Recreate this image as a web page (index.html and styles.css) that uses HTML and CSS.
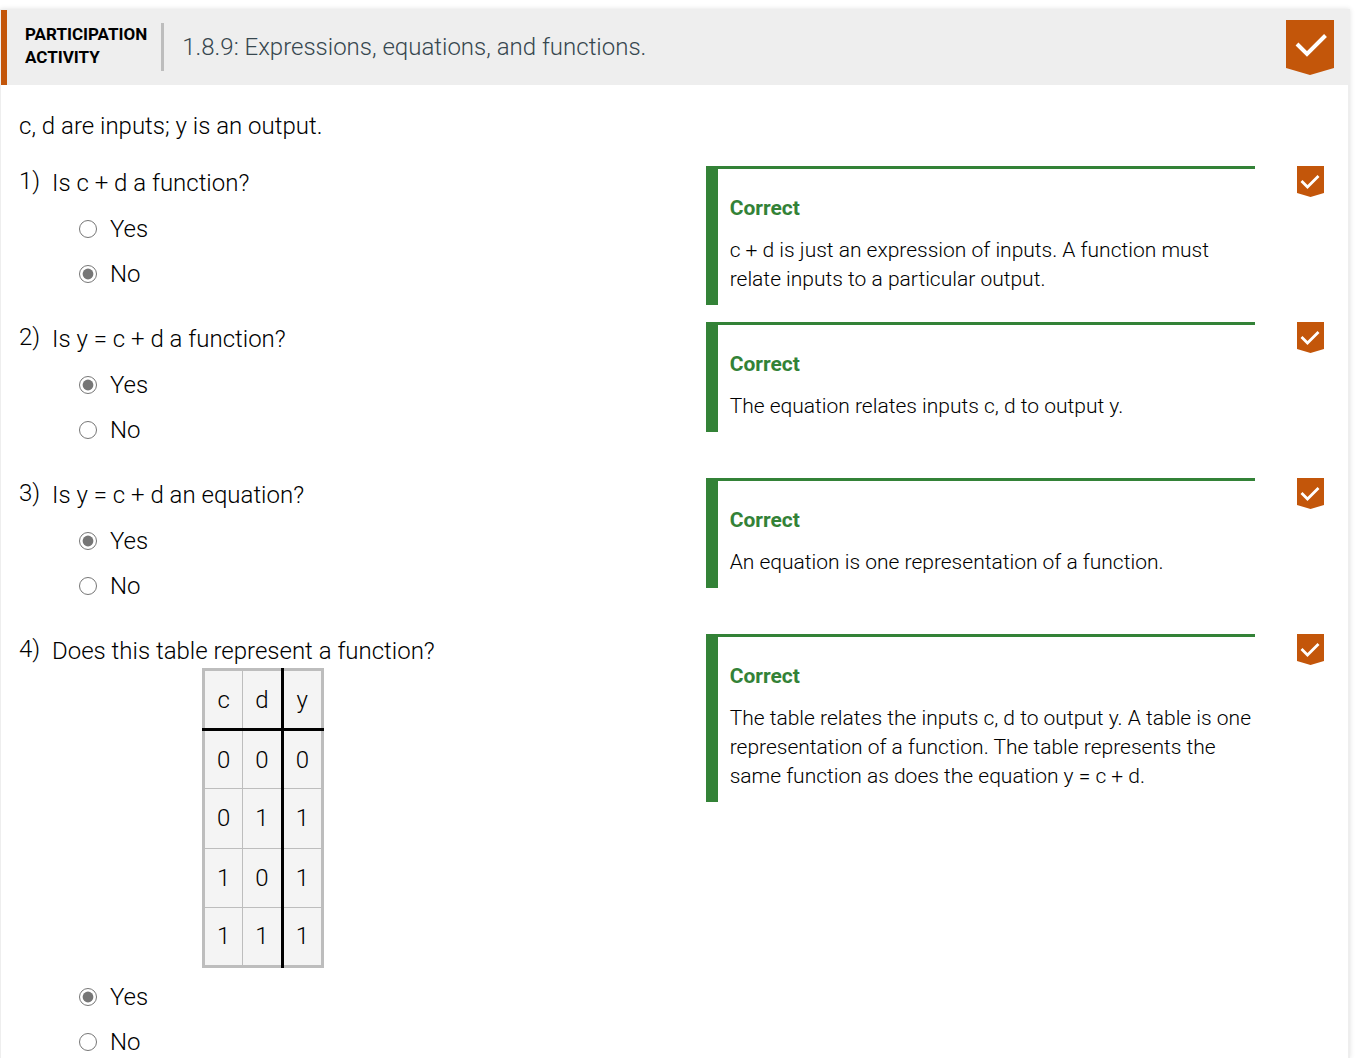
FILE: index.html
```html
<!DOCTYPE html>
<html lang="en">
<head>
<meta charset="utf-8">
<meta name="viewport" content="width=device-width, initial-scale=1">
<title>1.8.9: Expressions, equations, and functions.</title>
<link rel="stylesheet" href="styles.css">
</head>
<body>
<svg class="sprite" aria-hidden="true">
  <symbol id="chevron-check-large" viewBox="0 0 48 55">
    <path d="M0 0H48V48L24 55L0 48Z" fill="#c3560a"/>
    <path d="M11 24L21 34L39.500 15.500" fill="none" stroke="#fff" stroke-width="4"/>
  </symbol>
  <symbol id="chevron-check" viewBox="0 0 27 31">
    <path d="M0 0H27V27L13.500 31L0 27Z" fill="#c3560a"/>
    <path d="M4.500 15L10.500 21L21.500 10" fill="none" stroke="#fff" stroke-width="2.800"/>
  </symbol>
</svg>
<main class="activity">
  <header class="activity-header">
    <div class="activity-type">PARTICIPATION<br>ACTIVITY</div>
    <h1 class="activity-title">1.8.9: Expressions, equations, and functions.</h1>
    <svg class="badge-large" role="img" aria-label="Activity completed"><use href="#chevron-check-large"/></svg>
  </header>
  <div class="activity-body">
    <p class="intro">c, d are inputs; y is an output.</p>

    <section class="question">
      <div class="ask">
        <div class="number">1)</div>
        <fieldset class="prompt">
          <legend class="text">Is c + d a function?</legend>
          <div class="options">
            <label class="option"><input class="radio" type="radio" name="q1">Yes</label>
            <label class="option"><input class="radio" type="radio" name="q1" checked>No</label>
          </div>
        </fieldset>
      </div>
      <div class="explanation">
        <h2 class="result">Correct</h2>
        <p class="detail">c + d is just an expression of inputs. A function must relate inputs to a particular output.</p>
      </div>
      <svg class="badge" role="img" aria-label="Question completed"><use href="#chevron-check"/></svg>
    </section>

    <section class="question">
      <div class="ask">
        <div class="number">2)</div>
        <fieldset class="prompt">
          <legend class="text">Is y = c + d a function?</legend>
          <div class="options">
            <label class="option"><input class="radio" type="radio" name="q2" checked>Yes</label>
            <label class="option"><input class="radio" type="radio" name="q2">No</label>
          </div>
        </fieldset>
      </div>
      <div class="explanation">
        <h2 class="result">Correct</h2>
        <p class="detail">The equation relates inputs c, d to output y.</p>
      </div>
      <svg class="badge" role="img" aria-label="Question completed"><use href="#chevron-check"/></svg>
    </section>

    <section class="question">
      <div class="ask">
        <div class="number">3)</div>
        <fieldset class="prompt">
          <legend class="text">Is y = c + d an equation?</legend>
          <div class="options">
            <label class="option"><input class="radio" type="radio" name="q3" checked>Yes</label>
            <label class="option"><input class="radio" type="radio" name="q3">No</label>
          </div>
        </fieldset>
      </div>
      <div class="explanation">
        <h2 class="result">Correct</h2>
        <p class="detail">An equation is one representation of a function.</p>
      </div>
      <svg class="badge" role="img" aria-label="Question completed"><use href="#chevron-check"/></svg>
    </section>

    <section class="question">
      <div class="ask">
        <div class="number">4)</div>
        <fieldset class="prompt">
          <legend class="text">Does this table represent a function?</legend>
          <table class="truth-table">
            <thead>
              <tr><th scope="col">c</th><th scope="col">d</th><th scope="col">y</th></tr>
            </thead>
            <tbody>
              <tr><td>0</td><td>0</td><td>0</td></tr>
              <tr><td>0</td><td>1</td><td>1</td></tr>
              <tr><td>1</td><td>0</td><td>1</td></tr>
              <tr><td>1</td><td>1</td><td>1</td></tr>
            </tbody>
          </table>
          <div class="options">
            <label class="option"><input class="radio" type="radio" name="q4" checked>Yes</label>
            <label class="option"><input class="radio" type="radio" name="q4">No</label>
          </div>
        </fieldset>
      </div>
      <div class="explanation">
        <h2 class="result">Correct</h2>
        <p class="detail">The table relates the inputs c, d to output y. A table is one representation of a function. The table represents the same function as does the equation y = c + d.</p>
      </div>
      <svg class="badge" role="img" aria-label="Question completed"><use href="#chevron-check"/></svg>
    </section>
  </div>
</main>
</body>
</html>
```
FILE: styles.css
```css
* { box-sizing: border-box; }

body {
  margin: 0;
  padding: 9px 5px 0 0;
  background: #fff;
  color: #000;
  font-family: Roboto, "Liberation Sans", sans-serif;
  font-size: 24px;
  font-weight: 300;
}

.sprite { position: absolute; width: 0; height: 0; }

.activity {
  border: 1px solid #eee;
  border-width: 1px 2px 0 1px;
  box-shadow: 0 0 5px rgba(0, 0, 0, 0.12);
}

.activity-header {
  display: flex;
  align-items: flex-start;
  padding: 10px 14px 10px 18px;
  border-left: 6px solid #c3560a;
  background: #eee;
}

.activity-type {
  margin-top: 3px;
  padding: 0 14px 2px 0;
  border-right: 3px solid #bdbdbd;
  font-size: 17px;
  font-weight: 700;
  line-height: 23px;
}

.activity-title {
  flex: 1;
  margin: 10px 0 0 18px;
  color: #37474f;
  font-size: 24px;
  font-weight: 300;
  line-height: 34px;
}

.badge-large { width: 48px; height: 55px; }

.activity-body { padding: 24px 24px 0 18px; }

.intro { margin: 0 0 23px; line-height: 34px; }

.question {
  display: grid;
  grid-template-columns: minmax(0, 5fr) minmax(0, 4fr) 69px;
  align-items: start;
  min-height: 156px;
  padding-bottom: 17px;
}

.question:last-child { padding-bottom: 0; }

.ask {
  display: grid;
  grid-template-columns: 33px minmax(0, 1fr);
}

.number { line-height: 30px; }

.prompt { min-width: 0; margin: 0; padding: 0; border: 0; }

.text { padding: 0; line-height: 34px; }

.options {
  display: grid;
  gap: 13px;
  justify-items: start;
  padding: 13px 0 0 27px;
}

.option { display: flex; align-items: center; gap: 13px; line-height: 32px; }

.radio { width: 18px; height: 18px; margin: 0; accent-color: #767676; }

.explanation {
  padding: 25px 0 11px 12px;
  border-top: 3px solid #338237;
  border-left: 12px solid #338237;
}

.result {
  margin: 0 0 13px;
  color: #338237;
  font-size: 21px;
  font-weight: 700;
  line-height: 29px;
}

.detail { margin: 0; font-size: 21px; line-height: 29px; }

.badge { width: 27px; height: 31px; justify-self: end; }

.truth-table {
  height: 300px;
  margin-left: 150px;
  border: 3px solid #bdbdbd;
  border-collapse: collapse;
  background: #f4f4f4;
  text-align: center;
}

.truth-table th,
.truth-table td {
  height: 59px;
  padding: 0 12px;
  border: 1px solid #bdbdbd;
  font-weight: 300;
  line-height: 34px;
}

.truth-table th { height: 60px; border-bottom: 3px solid #000; }

.truth-table th:last-child,
.truth-table td:last-child { border-left: 3px solid #000; }
```
